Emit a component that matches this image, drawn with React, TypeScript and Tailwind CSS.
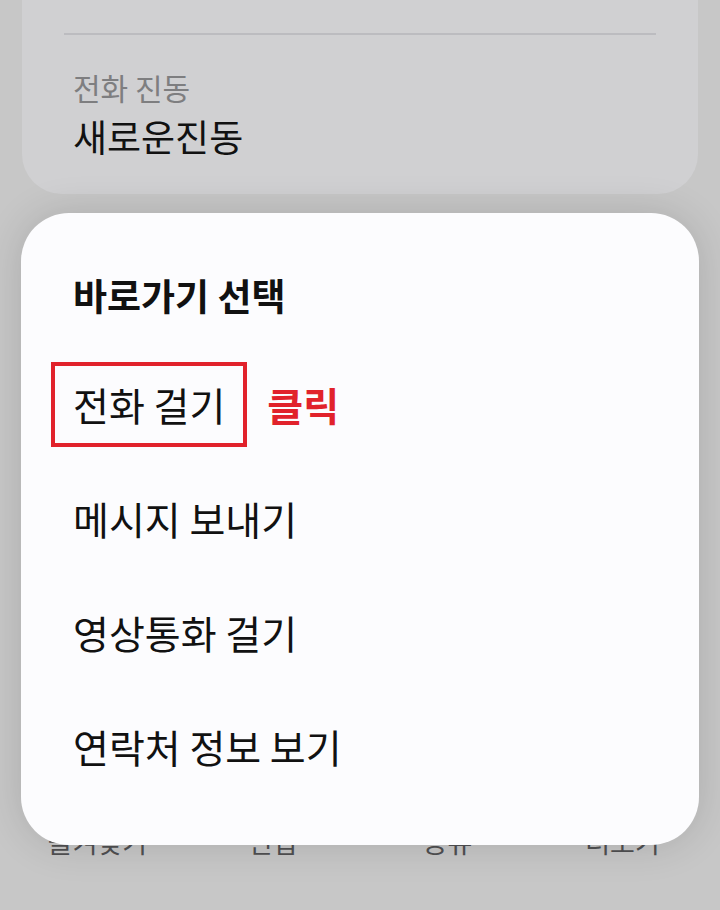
const font = { fontFamily: '"Noto Sans CJK KR", "Noto Sans", sans-serif' }

const shortcuts = ['메시지 보내기', '영상통화 걸기', '연락처 정보 보기']
const navItems = ['즐겨찾기', '편집', '공유', '더보기']

export default function App() {
  return (
    <div
      className="relative w-[720px] h-[910px] overflow-hidden bg-[#c7c7c7] flex flex-col"
      style={font}
    >
      {/* 뒤쪽 설정 카드 */}
      <div className="mx-[22px] rounded-b-[40px] bg-[#d0d0d2] pt-[33px] pb-[39px]">
        <div className="mx-[42px] h-[2px] bg-[#bcbcc0]" />
        <div className="flex flex-col px-[51px]">
          <span className="mt-[37px] text-[30px] leading-[30px] text-[#7e7e80]">전화 진동</span>
          <span className="mt-[15px] text-[37px] leading-[38px] text-[#111]">새로운진동</span>
        </div>
      </div>

      {/* 하단 메뉴 */}
      <div className="mt-[633px] grid grid-cols-4 px-[10px]">
        {navItems.map((item) => (
          <span key={item} className="text-center text-[27px] leading-[30px] text-[#505052]">
            {item}
          </span>
        ))}
      </div>

      {/* 바로가기 선택 팝업 */}
      <div className="absolute left-[21px] top-[213px] w-[678px] h-[632px] rounded-[48px] bg-[#fcfcfe] shadow-[0_0_40px_rgba(0,0,0,0.14)] pt-[52px] px-[52px]">
        <div className="h-[60px] flex items-center text-[37px] leading-none font-bold text-[#111]">
          바로가기 선택
        </div>
        <div className="mt-[22px] flex flex-col">
          <div className="h-[114px] flex items-center">
            <div className="-ml-[22px] h-[85px] flex items-center border-4 border-[#e1222b] px-[18px] text-[39px] leading-none text-[#111]">
              전화 걸기
            </div>
            <span className="ml-[20px] text-[39px] leading-none font-bold text-[#e1222b]">클릭</span>
          </div>
          {shortcuts.map((label) => (
            <div key={label} className="h-[114px] flex items-center text-[39px] leading-none text-[#111]">
              {label}
            </div>
          ))}
        </div>
      </div>
    </div>
  )
}
